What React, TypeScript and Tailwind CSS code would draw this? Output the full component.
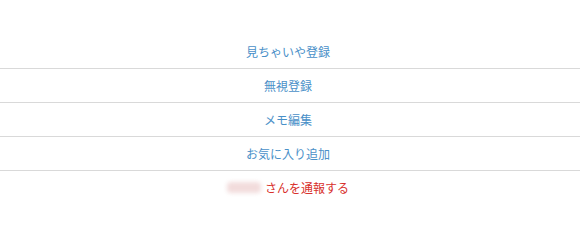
const items = ['見ちゃいや登録', '無視登録', 'メモ編集', 'お気に入り追加'];

export default function App() {
  return (
    <div
      className="w-[580px] h-[239px] bg-white pt-[35px] text-[12px]"
      style={{ fontFamily: '"Noto Sans CJK JP", "Noto Sans", sans-serif' }}
    >
      <ul>
        {items.map((label) => (
          <li
            key={label}
            className="h-[34px] flex items-center justify-center border-b border-[#d9d9d9] text-[#4a90c8] pr-[4px]"
          >
            {label}
          </li>
        ))}
        <li className="h-[33px] flex items-center justify-center text-[#d8302c] pr-[4px]">
          <span className="inline-block w-[34px] h-[11px] mr-[4px] rounded-sm bg-[#f2dcdc] blur-[2px]" />
          さんを通報する
        </li>
      </ul>
    </div>
  );
}
